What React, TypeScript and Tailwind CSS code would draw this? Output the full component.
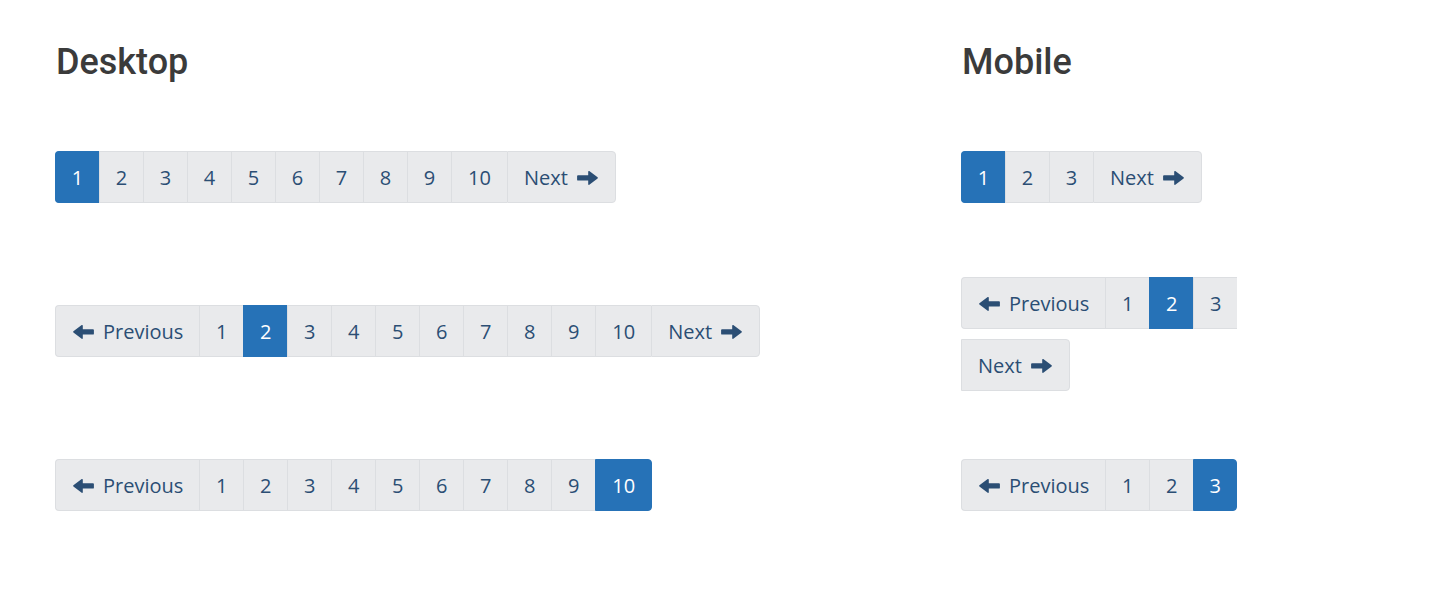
import React from "react";

type Item = { label: string; kind: "prev" | "next" | "page"; active?: boolean };

function Arrow({ dir }: { dir: "left" | "right" }) {
  return (
    <svg
      width="22"
      height="16"
      viewBox="0 0 22 16"
      className={dir === "left" ? "-scale-x-100" : ""}
      fill="currentColor"
    >
      <path d="M1 5.2h10.2V1.6c0-.6.7-.9 1.1-.5l8.3 6.2c.4.3.4.9 0 1.2l-8.3 6.2c-.4.4-1.1.1-1.1-.5v-3.6H1c-.5 0-.9-.4-.9-.9V6.1c0-.5.4-.9.9-.9z" />
    </svg>
  );
}

function build(active: number, count: number): Item[] {
  const items: Item[] = [];
  if (active > 1) items.push({ label: "Previous", kind: "prev" });
  for (let i = 1; i <= count; i++) items.push({ label: String(i), kind: "page", active: i === active });
  if (active < count) items.push({ label: "Next", kind: "next" });
  return items;
}

function Pager({ active, count }: { active: number; count: number }) {
  const items = build(active, count);
  return (
    <ul className="flex flex-wrap gap-y-[10px] font-['Open_Sans',sans-serif] text-[20px] text-[#2b4e74]">
      {items.map((it, i) => {
        const first = i === 0;
        const last = i === items.length - 1;
        const single = it.kind === "page" && it.label.length === 1;
        return (
          <li
            key={it.label}
            className={[
              "flex h-[52px] items-center justify-center gap-[9px] border-y border-l pt-px",
              single ? "w-[44px]" : "px-4",
              last ? "border-r rounded-r" : "",
              first ? "rounded-l" : "",
              it.active
                ? "bg-[#2672b7] border-[#2672b7] text-white"
                : "bg-[#e9eaec] border-[#dcdee1]",
            ].join(" ")}
          >
            {it.kind === "prev" && <Arrow dir="left" />}
            <span>{it.label}</span>
            {it.kind === "next" && <Arrow dir="right" />}
          </li>
        );
      })}
    </ul>
  );
}

function Row({ children, nudge }: { children: React.ReactNode; nudge?: boolean }) {
  return (
    <div className="flex h-[154px] items-center">
      <div className={nudge ? "mt-[6px]" : ""}>{children}</div>
    </div>
  );
}

function Heading({ children }: { children: React.ReactNode }) {
  return (
    <h2 className="h-[100px] pt-[44px] pl-px font-['Roboto',sans-serif] text-[36px] leading-[36px] font-medium text-[#3b3b3b]">
      {children}
    </h2>
  );
}

export default function App() {
  return (
    <div className="flex h-[592px] w-[1436px] bg-white pl-[55px]">
      <section className="w-[906px]">
        <Heading>Desktop</Heading>
        <Row><Pager active={1} count={10} /></Row>
        <Row><Pager active={2} count={10} /></Row>
        <Row><Pager active={10} count={10} /></Row>
      </section>
      <section className="w-[300px]">
        <Heading>Mobile</Heading>
        <Row><Pager active={1} count={3} /></Row>
        <Row nudge><Pager active={2} count={3} /></Row>
        <Row><Pager active={3} count={3} /></Row>
      </section>
    </div>
  );
}
